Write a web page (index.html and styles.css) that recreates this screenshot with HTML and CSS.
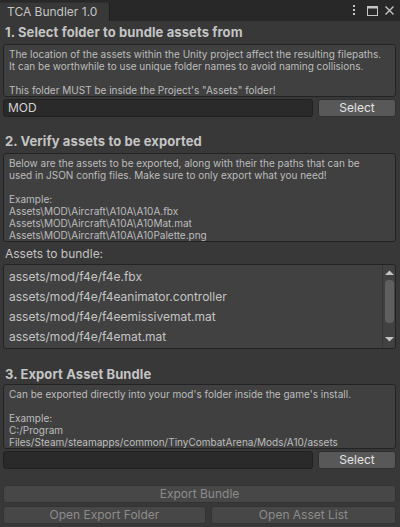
FILE: index.html
```html
<!DOCTYPE html>
<html>
<head>
<meta charset="utf-8">
<link rel="stylesheet" href="styles.css">
</head>
<body>
<div class="window">
  <div class="tabbar">
    <div class="tab">TCA Bundler 1.0</div>
    <div class="tab-icons">
      <svg class="kebab" width="4" height="11" viewBox="0 0 4 11"><rect x="1" y="0" width="2" height="2" fill="#c4c4c4"/><rect x="1" y="4" width="2" height="2" fill="#c4c4c4"/><rect x="1" y="8" width="2" height="2" fill="#c4c4c4"/></svg>
      <svg class="maxi" width="11" height="10" viewBox="0 0 11 10"><rect x="0.5" y="0.5" width="10" height="9" fill="none" stroke="#c4c4c4"/><rect x="0.5" y="0.5" width="10" height="2" fill="#c4c4c4"/></svg>
      <svg class="close" width="9" height="9" viewBox="0 0 9 9"><path d="M0.5 0.5 L8.5 8.5 M8.5 0.5 L0.5 8.5" stroke="#c4c4c4" stroke-width="1.4"/></svg>
    </div>
  </div>
  <div class="content">
    <div class="heading h1">1. Select folder to bundle assets from</div>
    <div class="helpbox">The location of the assets within the Unity project affect the resulting filepaths.
It can be worthwhile to use unique folder names to avoid naming collisions.

This folder MUST be inside the Project's "Assets" folder!</div>
    <div class="field-row">
      <div class="textfield">MOD</div>
      <div class="button">Select</div>
    </div>

    <div class="heading h2">2. Verify assets to be exported</div>
    <div class="helpbox">Below are the assets to be exported, along with their the paths that can be
used in JSON config files. Make sure to only export what you need!

Example:
Assets\MOD\Aircraft\A10A\A10A.fbx
Assets\MOD\Aircraft\A10A\A10Mat.mat
Assets\MOD\Aircraft\A10A\A10Palette.png</div>
    <div class="label">Assets to bundle:</div>
    <div class="listbox">
      <div class="items">
        <div class="item">assets/mod/f4e/f4e.fbx</div>
        <div class="item">assets/mod/f4e/f4eanimator.controller</div>
        <div class="item">assets/mod/f4e/f4eemissivemat.mat</div>
        <div class="item">assets/mod/f4e/f4emat.mat</div>
      </div>
      <div class="scrollbar">
        <svg class="arrow" width="9" height="6" viewBox="0 0 9 6"><path d="M0 5 L4.5 0.5 L9 5 Z" fill="#c4c4c4"/></svg>
        <div class="thumb"></div>
        <svg class="arrow down" width="9" height="6" viewBox="0 0 9 6"><path d="M0 1 L4.5 5.5 L9 1 Z" fill="#c4c4c4"/></svg>
      </div>
    </div>

    <div class="heading h3">3. Export Asset Bundle</div>
    <div class="helpbox">Can be exported directly into your mod's folder inside the game's install.

Example:
C:/Program
Files/Steam/steamapps/common/TinyCombatArena/Mods/A10/assets</div>
    <div class="field-row">
      <div class="textfield"></div>
      <div class="button">Select</div>
    </div>

    <div class="bottom">
      <div class="button disabled wide">Export Bundle</div>
      <div class="btn-row">
        <div class="button disabled left">Open Export Folder</div>
        <div class="button disabled right">Open Asset List</div>
      </div>
    </div>
  </div>
</div>
</body>
</html>
```

FILE: styles.css
```css
* { box-sizing: border-box; }
html, body { margin: 0; padding: 0; }
body {
  width: 400px;
  height: 527px;
  background: #383838;
  font-family: Inter, "Noto Sans", sans-serif;
  color: #c4c4c4;
  overflow: hidden;
}
.window { width: 400px; height: 527px; display: flex; flex-direction: column; }
.tabbar {
  height: 21px;
  flex: none;
  background: #282828;
  display: flex;
  align-items: flex-end;
  justify-content: space-between;
}
.tab {
  height: 19px;
  width: 110px;
  background: #383838;
  border-top: 1px solid #2f2f2f;
  border-right: 1px solid #1e1e1e;
  border-radius: 0 3px 0 0;
  font-size: 12px;
  line-height: 18px;
  padding-left: 7px;
  color: #c4c4c4;
}
.tab-icons {
  height: 21px;
  display: flex;
  align-items: center;
  padding-right: 6px;
}
.tab-icons svg { display: block; }
.kebab { margin-right: 11px; }
.maxi { margin-right: 7px; }
.content { padding: 0 4px 0 3px; display: flex; flex-direction: column; }
.heading {
  font-weight: bold;
  font-size: 13px;
  line-height: 16px;
  height: 16px;
  padding-left: 2px;
  color: #c4c4c4;
  letter-spacing: 0.1px;
}
.h1 { margin-top: 3px; }
.h2 { margin-top: 16px; }
.h3 { margin-top: 17px; }
.helpbox {
  margin-top: 4px;
  background: #404040;
  border: 1px solid #232323;
  border-radius: 3px;
  white-space: pre-wrap;
  font-size: 10px;
  line-height: 12px;
  padding: 3px 4px 0 5px;
  color: #bdbdbd;
}
.h3 + .helpbox { margin-top: 2px; }
.field-row { display: flex; gap: 5px; margin-top: 2px; height: 18px; }
.textfield {
  flex: 1;
  background: #2a2a2a;
  border: 1px solid #212121;
  border-radius: 3px;
  font-size: 12px;
  line-height: 16px;
  padding-left: 4px;
  color: #d2d2d2;
}
.button {
  width: 78px;
  background: #585858;
  border: 1px solid #303030;
  border-radius: 3px;
  text-align: center;
  font-size: 12px;
  line-height: 16px;
  color: #e4e4e4;
}
.label { font-size: 12px; line-height: 16px; margin-top: 4px; padding-left: 2px; height: 16px; }
.listbox {
  margin-top: 2px;
  height: 85px;
  background: #414141;
  border: 1px solid #232323;
  border-radius: 3px;
  display: flex;
}
.items { flex: 1; padding-top: 2px; padding-left: 5px; }
.item { font-size: 12px; line-height: 20px; height: 20px; color: #c4c4c4; }
.scrollbar {
  width: 13px;
  border-left: 1px solid #363636;
  display: flex;
  flex-direction: column;
  align-items: center;
  padding-top: 5px;
}
.arrow { display: block; }
.thumb {
  width: 9px;
  height: 43px;
  background: #5f5f5f;
  border-radius: 4px;
  margin-top: 4px;
}
.arrow.down { margin-top: auto; margin-bottom: 6px; }
.bottom { margin-top: 16px; display: flex; flex-direction: column; gap: 3px; }
.button.disabled { background: #474747; color: #8c8c8c; border-color: #333333; height: 18px; line-height: 16px; }
.button.wide { width: 100%; }
.btn-row { display: flex; gap: 5px; height: 18px; }
.btn-row .left { flex: 203 1 0; width: auto; }
.btn-row .right { flex: 185 1 0; width: auto; }
```
